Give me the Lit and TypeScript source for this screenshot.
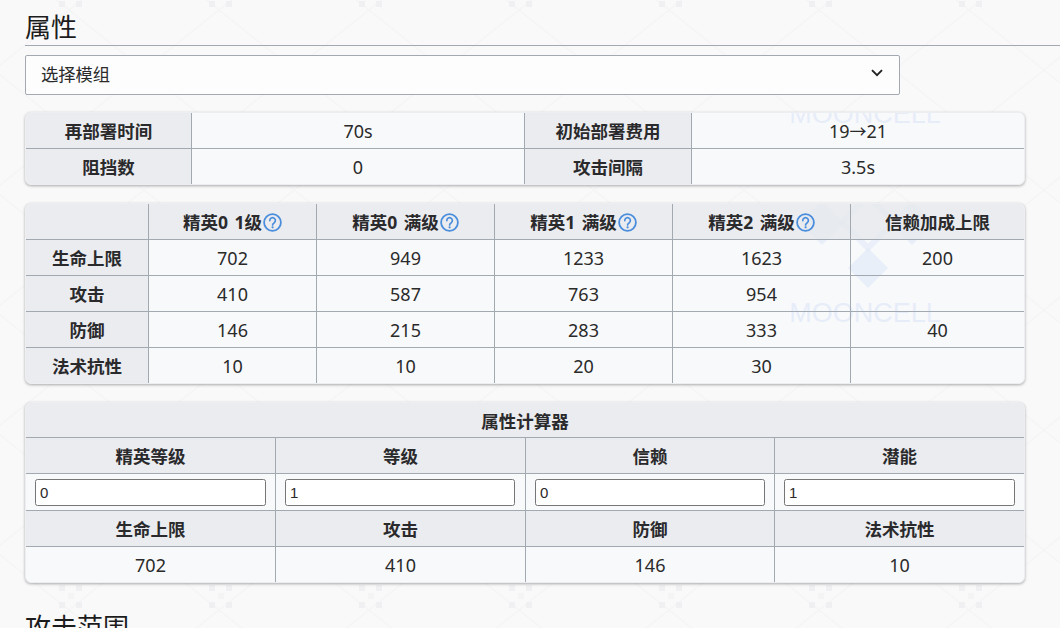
import { LitElement, html, css, svg } from "lit";
import { customElement } from "lit/decorators.js";

const help = html`<svg class="help" viewBox="0 0 19 19" aria-hidden="true"><circle cx="9.5" cy="9.5" r="8.4" fill="none" stroke="#4a8ddc" stroke-width="1.8"></circle><path d="M6.8 7.6a2.8 2.8 0 1 1 4.5 2.1c-1 .7-1.7 1.2-1.7 2.3" fill="none" stroke="#4a8ddc" stroke-width="1.7" stroke-linecap="round"></path><circle cx="9.6" cy="14.3" r="1.1" fill="#4a8ddc"></circle></svg>`;

const mark = (cls: string) => html`<svg class="mark ${cls}" viewBox="0 0 200 150" aria-hidden="true">
  <g fill="#dfe8f8" fill-opacity=".6">
    <path d="M42-3L20 19l22 22 22-22z"></path>
    <path d="M132-3l-22 22 22 22 22-22z"></path>
    <path d="M88 44L68 64l20 20 20-20z"></path>
  </g>
  <path d="M88-8L62 18l26 26 26-26z" fill="none" stroke="#dfe8f8" stroke-opacity=".55" stroke-width="6"></path>
  <text x="85" y="118" text-anchor="middle" class="marktext">MOONCELL</text>
</svg>`;

@customElement("app-root")
export class AppRoot extends LitElement {
  static styles = css`
    :host {
      display: block;
      position: relative;
      width: 1060px;
      height: 628px;
      overflow: hidden;
      background: #f9f9fa;
      color: #202122;
      font-family: "Noto Sans", "Noto Sans CJK SC", sans-serif;
    }
    .bg { position: absolute; inset: 0; width: 1060px; height: 628px; }
    .page { position: relative; padding-left: 25px; }
    h2 {
      margin: 0;
      height: 45px;
      box-sizing: content-box;
      border-bottom: 1px solid #a2a9b1;
      font: 400 26px/52px "Noto Sans CJK SC", sans-serif;
      color: #1c1c1c;
      white-space: nowrap;
    }
    .h2b { margin-top: 17px; }
    .select {
      box-sizing: border-box;
      width: 875px;
      height: 40px;
      margin-top: 9px;
      padding: 0 16px 4px 15px;
      display: flex;
      align-items: center;
      justify-content: space-between;
      border: 1px solid #a2a9b1;
      border-radius: 2px;
      background: #fdfdfe;
      font-size: 17.3px;
      font-family: "Noto Sans CJK SC", sans-serif;
      color: #2a2a2a;
    }
    .chev { width: 12px; height: 8px; }
    .box {
      position: relative;
      box-sizing: border-box;
      width: 1000px;
      margin-top: 18px;
      border: 1px solid #eceef1;
      border-radius: 6px;
      background: #f8f9fb;
      box-shadow: 0 1px 3px rgba(0, 0, 0, 0.32);
      overflow: hidden;
    }
    .box.first { margin-top: 17px; }
    .mark { position: absolute; left: 754px; width: 200px; height: 150px; }
    .m1 { top: -108px; }
    .m2 { top: 0; }
    .marktext {
      font: 400 27px "Liberation Sans", sans-serif;
      fill: #dfe8f8;
      fill-opacity: .7;
    }
    table {
      position: relative;
      width: 998px;
      table-layout: fixed;
      border-collapse: separate;
      border-spacing: 0;
    }
    th, td {
      box-sizing: border-box;
      height: 36px;
      padding: 0;
      text-align: center;
      vertical-align: middle;
      border-right: 1px solid #a2a9b1;
      border-bottom: 1px solid #a2a9b1;
      font-size: 18px;
    }
    th {
      font-weight: 700;
      font-size: 17.5px;
      word-spacing: 2px;
      background: rgba(230, 232, 236, 0.8);
      color: #2a2a2c;
    }
    td { font-weight: 400; color: #2a2a2a; }
    tr > :last-child { border-right: 0; }
    tr:last-child > * { border-bottom: 0; height: 35px; }
    .cap th { height: 35px; }
    .help { width: 19px; height: 19px; vertical-align: -3px; margin-left: 1px; }
    .arrow { font-family: "Noto Sans CJK SC", sans-serif; font-size: 17px; }
    .t1 .a { width: 166px; } .t1 .b { width: 333px; } .t1 .c { width: 167px; } .t1 .d { width: 332px; }
    .t2 .a { width: 123px; } .t2 .b { width: 168px; } .t2 .c { width: 178px; } .t2 .d { width: 173px; }
    .t3 .a { width: 250px; } .t3 .b { width: 249px; }
    .inrow td { height: 37px; }
    input {
      display: block;
      box-sizing: border-box;
      width: 231px;
      height: 27px;
      margin: 0 9px;
      padding: 1px 4px 0;
      border: 1px solid #767676;
      border-radius: 2.5px;
      background: #fff;
      font: 15px "Liberation Sans", sans-serif;
      color: #2a2a2a;
      outline: none;
    }
    td:nth-child(2) input, td:nth-child(3) input { width: 230px; }
  `;

  private background() {
    const motifs = [];
    for (let x = 0; x < 8; x++) {
      for (const y of [-16, 585]) {
        const l = 59 + x * 150;
        motifs.push(svg`<g fill="#f0f0f2">
          <rect x=${l} y=${y} width="6" height="6"></rect>
          <rect x=${l + 17} y=${y} width="6" height="6"></rect>
          <rect x=${l + 9} y=${y + 8} width="6" height="6" fill="#f4f4f5"></rect>
          <rect x=${l} y=${y + 17} width="6" height="6"></rect>
          <rect x=${l + 17} y=${y + 17} width="6" height="6"></rect>
        </g>`);
      }
    }
    return html`<svg class="bg" viewBox="0 0 1060 628" aria-hidden="true">
      <defs>
        <pattern id="lat" width="150" height="120" patternUnits="userSpaceOnUse" x="69" y="10">
          <path d="M0 0L150 120M150 0L0 120" stroke="#f5f5f6" stroke-width="1.5" fill="none"></path>
        </pattern>
      </defs>
      <rect width="1060" height="628" fill="url(#lat)"></rect>
      ${motifs}
    </svg>`;
  }

  render() {
    const inputs = ["0", "1", "0", "1"];
    return html`
      ${this.background()}
      <div class="page">
        <h2>属性</h2>
        <div class="select">
          <span>选择模组</span>
          <svg class="chev" viewBox="0 0 12 8" aria-hidden="true"><path d="M1 1.2l5 5 5-5" fill="none" stroke="#222" stroke-width="1.9"></path></svg>
        </div>

        <div class="box first">
          ${mark("m1")}
          <table class="t1">
            <colgroup><col class="a" /><col class="b" /><col class="c" /><col class="d" /></colgroup>
            <tr><th>再部署时间</th><td>70s</td><th>初始部署费用</th><td>19<span class="arrow">→</span>21</td></tr>
            <tr><th>阻挡数</th><td>0</td><th>攻击间隔</th><td>3.5s</td></tr>
          </table>
        </div>

        <div class="box">
          ${mark("m2")}
          <table class="t2">
            <colgroup><col class="a" /><col class="b" /><col class="c" /><col class="c" /><col class="c" /><col class="d" /></colgroup>
            <tr><th></th><th>精英0 1级${help}</th><th>精英0 满级${help}</th><th>精英1 满级${help}</th><th>精英2 满级${help}</th><th>信赖加成上限</th></tr>
            <tr><th>生命上限</th><td>702</td><td>949</td><td>1233</td><td>1623</td><td>200</td></tr>
            <tr><th>攻击</th><td>410</td><td>587</td><td>763</td><td>954</td><td></td></tr>
            <tr><th>防御</th><td>146</td><td>215</td><td>283</td><td>333</td><td>40</td></tr>
            <tr><th>法术抗性</th><td>10</td><td>10</td><td>20</td><td>30</td><td></td></tr>
          </table>
        </div>

        <div class="box">
          <table class="t3">
            <colgroup><col class="a" /><col class="a" /><col class="b" /><col class="b" /></colgroup>
            <tr class="cap"><th colspan="4">属性计算器</th></tr>
            <tr><th>精英等级</th><th>等级</th><th>信赖</th><th>潜能</th></tr>
            <tr class="inrow">${inputs.map((v) => html`<td><input .value=${v} /></td>`)}</tr>
            <tr><th>生命上限</th><th>攻击</th><th>防御</th><th>法术抗性</th></tr>
            <tr><td>702</td><td>410</td><td>146</td><td>10</td></tr>
          </table>
        </div>

        <h2 class="h2b">攻击范围</h2>
      </div>
    `;
  }
}
